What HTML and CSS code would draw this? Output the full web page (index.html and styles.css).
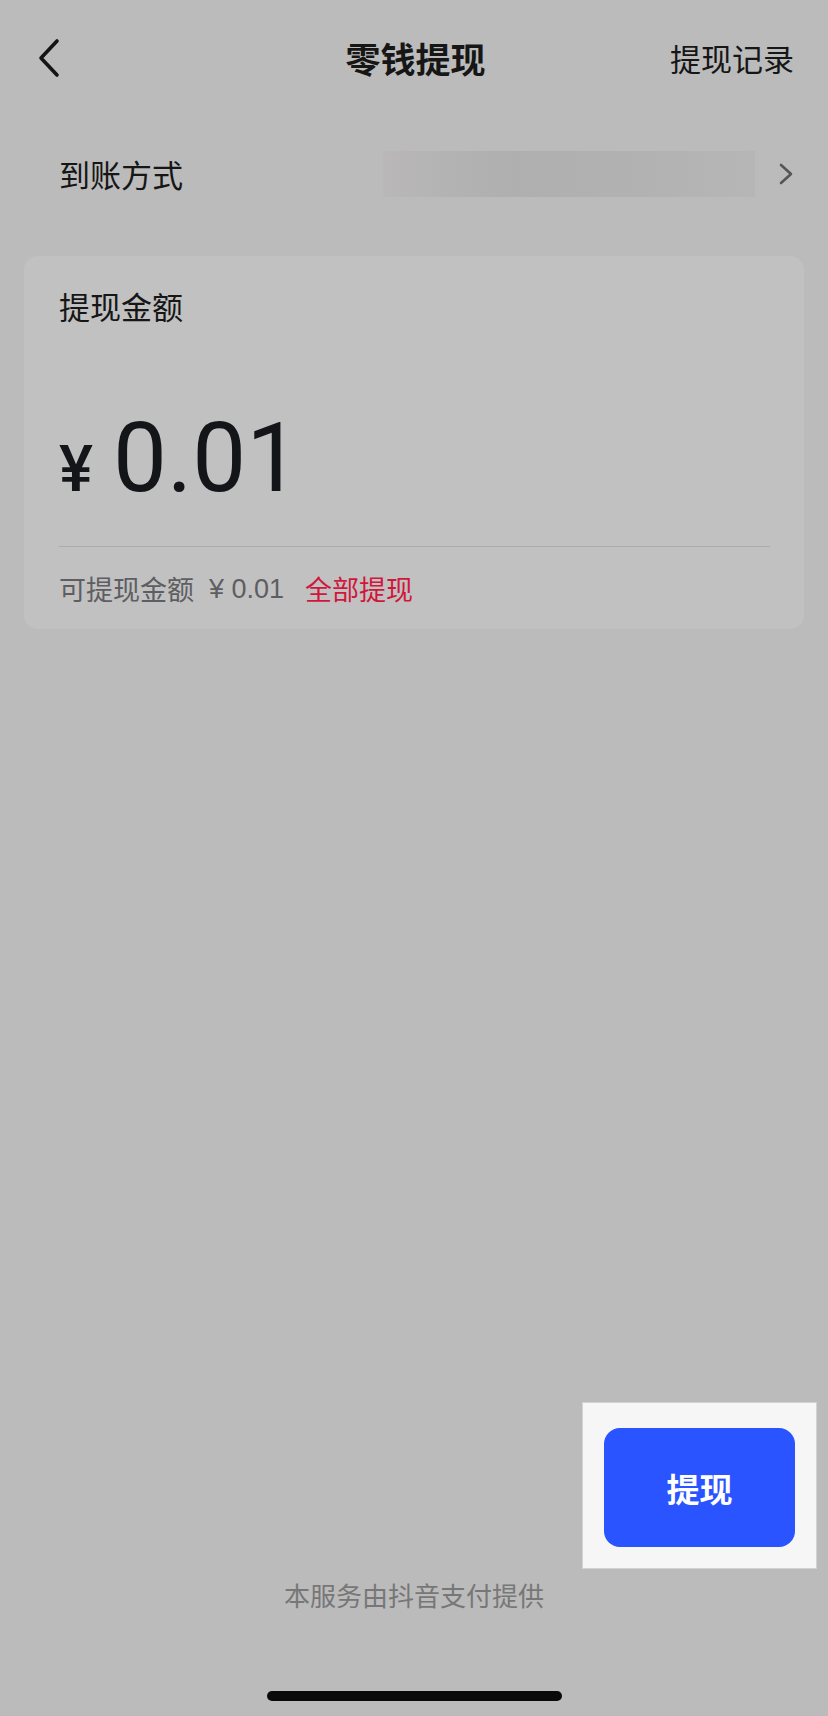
FILE: index.html
```html
<!DOCTYPE html>
<html lang="zh-CN">
<head>
  <meta charset="UTF-8" />
  <meta name="viewport" content="width=device-width, initial-scale=1.0" />
  <title>零钱提现</title>
  <link rel="stylesheet" href="styles.css">
</head>
<body>
  <div class="nav">
    <div class="voltar">
      <svg width="24" height="40" viewBox="0 0 24 40">
        <polyline points="20,3 4,20 20,37" fill="none" stroke="#141414" stroke-width="3.6" stroke-linecap="round" stroke-linejoin="round" />
      </svg>
    </div>
    <div class="titulo">零钱提现</div>
    <div class="registro">提现记录</div>
  </div>

  <div class="metodo">
    <span class="metodo-label">到账方式</span>
    <div class="metodo-valor"></div>
    <svg class="seta" width="14" height="22" viewBox="0 0 14 22">
      <polyline points="2,2 12,11 2,20" fill="none" stroke="#555" stroke-width="2.6" stroke-linecap="round" stroke-linejoin="round" />
    </svg>
  </div>

  <div class="card">
    <div class="card-label">提现金额</div>
    <div class="valor">
      <span class="moeda">¥</span>
      <span class="numero">0.01</span>
    </div>
    <div class="divisor"></div>
    <div class="disponivel">
      <span>可提现金额</span>
      <span class="disp-valor">¥ 0.01</span>
      <span class="tudo">全部提现</span>
    </div>
  </div>

  <div class="espaco"></div>

  <div class="acoes">
    <div class="caixa">
      <button class="btn-sacar">提现</button>
    </div>
  </div>

  <div class="rodape">本服务由抖音支付提供</div>
  <div class="indicador"></div>
</body>
</html>
```

FILE: styles.css
```css
* {
  box-sizing: border-box;
}

body {
  font-family: "Noto Sans CJK SC", sans-serif;
  background-color: #bbbbbb;
  color: #161616;
  margin: 0;
  width: 828px;
  height: 1716px;
  display: flex;
  flex-direction: column;
}

.nav {
  height: 115px;
  display: grid;
  grid-template-columns: 1fr auto 1fr;
  align-items: center;
  padding: 0 34px 0 37px;
}

.voltar svg {
  display: block;
}

.titulo {
  font-size: 35px;
  font-weight: bold;
  line-height: 44px;
}

.registro {
  justify-self: end;
  font-size: 31px;
  line-height: 44px;
}

.metodo {
  margin-top: 36px;
  height: 46px;
  display: flex;
  align-items: center;
  padding: 0 35px 0 59px;
}

.metodo-label {
  font-size: 31px;
  line-height: 44px;
  width: 324px;
}

.metodo-valor {
  width: 372px;
  height: 46px;
  background: linear-gradient(90deg, #b9b7b7, #afafaf 35%, #b2b2b2 70%, #b6b6b6);
}

.seta {
  display: block;
  margin-left: 24px;
}

.card {
  margin: 59px 24px 0;
  background-color: #c1c1c1;
  border-radius: 14px;
  padding: 28px 34px 21px 35px;
}

.card-label {
  font-size: 31px;
  line-height: 44px;
}

.valor {
  margin-top: 83px;
  display: flex;
  align-items: baseline;
  font-family: "Roboto", "Liberation Sans", sans-serif;
  color: #141519;
  line-height: 95px;
  height: 95px;
}

.moeda {
  font-size: 64px;
  font-weight: 500;
  margin-right: 20px;
}

.numero {
  font-size: 96px;
  letter-spacing: 0;
}

.divisor {
  margin-top: 40px;
  height: 1px;
  background-color: #acacac;
}

.disponivel {
  margin-top: 23px;
  font-size: 27px;
  line-height: 38px;
  color: #5e5e62;
  display: flex;
  align-items: center;
}

.disp-valor {
  font-family: "Liberation Sans", sans-serif;
  font-size: 27px;
  margin-left: 15px;
}

.tudo {
  color: #d1163c;
  margin-left: 21px;
}

.espaco {
  flex: 1;
}

.acoes {
  display: flex;
  justify-content: flex-end;
  padding-right: 11px;
}

.caixa {
  width: 235px;
  height: 167px;
  background-color: #f6f6f7;
  border: 1px solid #d3d3d3;
  padding: 25px 21px 21px 21px;
}

.btn-sacar {
  width: 191px;
  height: 119px;
  border: none;
  border-radius: 16px;
  background-color: #2954ff;
  color: #fff;
  font-family: "Noto Sans CJK SC", sans-serif;
  font-size: 33px;
  font-weight: bold;
  padding: 0;
}

.rodape {
  margin-top: 8px;
  text-align: center;
  font-size: 26px;
  line-height: 36px;
  color: #777777;
}

.indicador {
  margin: 78px auto 15px;
  width: 295px;
  height: 10px;
  border-radius: 5px;
  background-color: #0a0a0a;
}
```
